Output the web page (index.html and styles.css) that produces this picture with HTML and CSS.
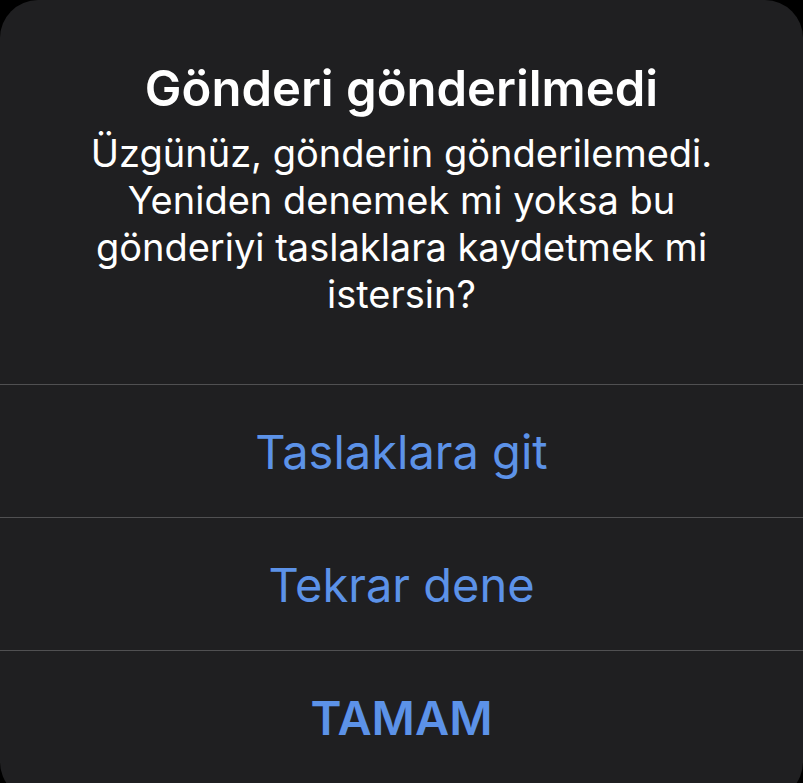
FILE: index.html
```html
<!DOCTYPE html>
<html lang="tr">
<head>
    <meta charset="UTF-8">
    <meta name="viewport" content="width=device-width, initial-scale=1.0">
    <title>Gönderi gönderilmedi</title>
    <link rel="stylesheet" href="styles.css">
</head>
<body>
    <div class="alert">
        <div class="alert-content">
            <h1 class="alert-title">Gönderi gönderilmedi</h1>
            <p class="alert-message">Üzgünüz, gönderin gönderilemedi. Yeniden denemek mi yoksa bu gönderiyi taslaklara kaydetmek mi istersin?</p>
        </div>
        <button class="alert-action">Taslaklara git</button>
        <button class="alert-action">Tekrar dene</button>
        <button class="alert-action primary">TAMAM</button>
    </div>
</body>
</html>
```

FILE: styles.css
```css
html, body {
    margin: 0;
    height: 100%;
}
body {
    background-color: #000000;
    font-family: Inter, 'Noto Sans', sans-serif;
    overflow: hidden;
}
.alert {
    width: 803px;
    height: 800px;
    background-color: #1f1f21;
    border-radius: 38px;
    display: flex;
    flex-direction: column;
}
.alert-content {
    padding: 60px 70px 66px;
    text-align: center;
    color: #ffffff;
}
.alert-title {
    margin: 0;
    font-size: 49px;
    line-height: 58px;
    font-weight: 600;
}
.alert-message {
    margin: 12px 0 0;
    font-size: 38px;
    line-height: 47px;
    font-weight: 400;
}
.alert-action {
    display: block;
    width: 100%;
    height: 133px;
    margin: 0;
    padding: 0;
    border: none;
    border-top: 1px solid #505052;
    background: transparent;
    color: #5c92e8;
    font-family: inherit;
    font-size: 47px;
    font-weight: 400;
    cursor: pointer;
}
.alert-action.primary {
    font-weight: 600;
}
```
